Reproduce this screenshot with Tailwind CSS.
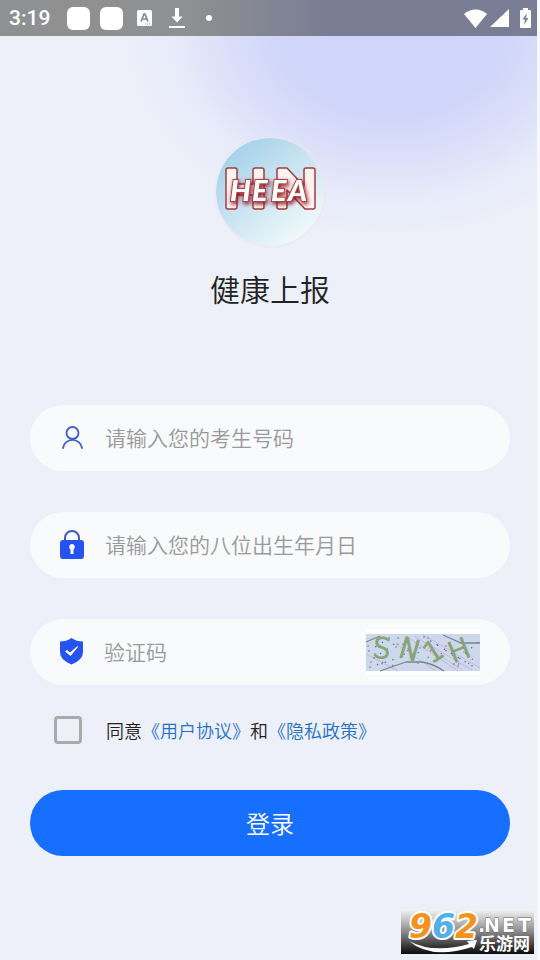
<!DOCTYPE html>
<html lang="zh-CN">
<head>
    <meta charset="UTF-8">
    <meta name="viewport" content="width=device-width, initial-scale=1.0">
    <title>健康上报</title>
    <script src="https://cdn.jsdelivr.net/npm/@tailwindcss/browser@4"></script>
</head>
<body class="relative min-h-screen overflow-x-hidden bg-[#edf0f9] border-r-[3px] border-[#f7f9fd] font-['Noto_Sans_CJK_SC',sans-serif] font-[350] text-[#222]">
    <!-- Background glow -->
    <div class="absolute inset-x-0 top-0 h-80 bg-[radial-gradient(ellipse_270px_215px_at_73%_24px,#cfd5fa_0%,#d0d6fa_42%,#dce0f9_64%,#e7eaf9_80%,#edf0f9_100%)]"></div>

    <!-- Status bar -->
    <header class="relative -mr-[3px] flex h-9 items-center justify-between bg-linear-to-r from-[#8f9092] from-35% to-[#7a7e94] to-60% pl-[9px] pr-[9px] text-white">
        <div class="flex items-center">
            <span class="w-[58px] font-[Roboto,sans-serif] text-[21px] font-medium leading-9">3:19</span>
            <span class="size-[23px] rounded-md bg-white"></span>
            <span class="ml-[10px] size-[23px] rounded-md bg-white"></span>
            <svg class="ml-[14px] h-4 w-[15px]" viewBox="0 0 15 16">
                <rect width="15" height="16" rx="1.5" fill="#fff"/>
                <path d="M4 11.500 7 4h1l3 7.500M5.200 9h4.600" fill="none" stroke="#85878d" stroke-width="1.700"/>
                <path d="M8 14h1m1 0h1m1 0h1" stroke="#85878d" stroke-width="1"/>
            </svg>
            <svg class="ml-[17px] h-[22px] w-4" viewBox="0 0 16 22" fill="#fff">
                <path d="M6 1h4v8.500h3.500L8 15.500 2.500 9.500H6zM0 19h16v2H0z"/>
            </svg>
            <span class="ml-[21px] size-[6px] rounded-full bg-white"></span>
        </div>
        <div class="flex items-center">
            <svg class="h-[19px] w-[23px]" viewBox="0 0 23 19" fill="#fff"><path d="M11.500 19 0 5Q5 .5 11.500.5T23 5z"/></svg>
            <svg class="ml-[3px] h-[18px] w-[19px]" viewBox="0 0 19 18" fill="#fff"><path d="M19 0v18H0z"/></svg>
            <svg class="ml-[11px] h-5 w-[11px]" viewBox="0 0 11 20">
                <path d="M3 0h5v2h2q1 0 1 1v16q0 1-1 1H1q-1 0-1-1V3q0-1 1-1h2z" fill="#fff"/>
                <path d="M7 5 2.500 11.500H5L4 17l4.500-7H6z" fill="#7a7e94"/>
            </svg>
        </div>
    </header>

    <main class="relative -mr-[3px] px-[30px] pb-24 pt-[102px]">
        <!-- Logo -->
        <div class="flex flex-col items-center">
            <svg class="size-[108px] rounded-full shadow-[0_0_3px_1px_#ebe6f1]" viewBox="0 0 108 108" role="img" aria-label="HEEA">
                <defs>
                    <linearGradient id="sky" x1=".1" y1=".1" x2=".8" y2=".95">
                        <stop offset="0" stop-color="#a3d0e9"/>
                        <stop offset=".5" stop-color="#cce5f2"/>
                        <stop offset="1" stop-color="#f2fafc"/>
                    </linearGradient>
                    <filter id="shade" x="-20%" y="-30%" width="140%" height="170%">
                        <feDropShadow dx="1" dy="2" stdDeviation="2" flood-color="#8d1014"/>
                    </filter>
                </defs>
                <circle cx="54" cy="54" r="54" fill="url(#sky)"/>
                <g fill="#fff3f2" stroke="#a33c3f" stroke-width="1.500" stroke-linejoin="round">
                    <path d="M12 30h7q2 0 2 2v14h16V32q0-2 2-2h7q2 0 2 2v37q0 2-2 2h-7q-2 0-2-2V57H21v12q0 2-2 2h-7q-2 0-2-2V32q0-2 2-2z"/>
                    <path d="M63 30h8l17 18V32q0-2 2-2h7q2 0 2 2v37q0 2-2 2h-8L71 52v17q0 2-2 2h-6q-2 0-2-2V32q0-2 2-2z"/>
                </g>
                <g filter="url(#shade)" font-family="Lato, sans-serif" font-size="29" font-weight="900" font-style="italic" fill="#fff" stroke="#b04548" stroke-width="2" paint-order="stroke">
                    <text x="14" y="63">H</text>
                    <text x="36" y="63">E</text>
                    <text x="55" y="63">E</text>
                    <text x="72" y="63">A</text>
                </g>
            </svg>
            <h1 class="mt-[22px] text-[30px] font-[350] leading-10">健康上报</h1>
        </div>

        <form class="mt-[97px]">
            <div class="flex flex-col gap-[41px]">
                <label class="flex h-[66px] items-center rounded-full bg-[#f8fafc] px-[30px]">
                    <svg class="size-6 shrink-0" viewBox="0 0 24 24" fill="none" stroke="#3c5fc4" stroke-width="1.800" stroke-linecap="round">
                        <circle cx="12.500" cy="7" r="6"/>
                        <path d="M3 22a9.600 9.600 0 0 1 19 0"/>
                    </svg>
                    <input type="text" aria-label="考生号码" placeholder="请输入您的考生号码" class="ml-[21px] w-full min-w-0 bg-transparent text-[21px] outline-none placeholder:text-[#999]">
                </label>
                <label class="flex h-[66px] items-center rounded-full bg-[#f8fafc] px-[30px]">
                    <svg class="h-[30px] w-6 shrink-0" viewBox="0 0 24 30">
                        <path d="M5 11V8a7 7 0 0 1 14 0v3" fill="none" stroke="#3c5bc0" stroke-width="2"/>
                        <rect y="10" width="24" height="19" rx="3" fill="#2653f0"/>
                        <path d="M12 14a3 3 0 0 1 1.500 5.500V24h-3v-4.500A3 3 0 0 1 12 14z" fill="#f8fafc"/>
                    </svg>
                    <input type="text" aria-label="出生年月日" placeholder="请输入您的八位出生年月日" class="ml-[21px] w-full min-w-0 bg-transparent text-[21px] outline-none placeholder:text-[#999]">
                </label>
                <div class="flex h-[66px] items-center rounded-full bg-[#f8fafc] px-[30px]">
                    <svg class="h-[28px] w-6 shrink-0" viewBox="0 0 24 28">
                        <path d="M11.500 0q5 3.500 11.500 3.500V14q0 8-11.500 12.500Q0 22 0 14V3.500Q6.500 3.500 11.500 0z" fill="#2653f0"/>
                        <path d="m5 13.500 2-1.500 3 2.500L17.500 8l.5 1-7.500 9z" fill="#f8fafc"/>
                    </svg>
                    <input type="text" aria-label="验证码" placeholder="验证码" class="ml-[20px] w-full min-w-0 flex-1 bg-transparent text-[21px] outline-none placeholder:text-[#999]">
                    <button type="button" aria-label="刷新验证码" class="flex h-[46px] w-[114px] shrink-0 items-center bg-white">
                        <svg class="h-[37px] w-[114px] overflow-visible" viewBox="0 0 114 37">
                            <rect width="114" height="37" fill="#cdd8ec"/>
                            <g fill="none" stroke="#c7b9dc" stroke-width="1">
                                <path d="m48 2 58 34M56 0l58 34M40 2l52 35M30 10l40 27M0 20l32 17M62 14l34 22"/>
                            </g>
                            <g fill="none" stroke-linecap="round" stroke-width="1.500">
                                <path stroke="#5b5f9c" stroke-dasharray="0 8" d="m3 17 22-14M8 24l26-18M4 33l38-12M32 4l24 30M58 3l50 30M88 30l24-22"/>
                                <path stroke="#b25a85" stroke-dasharray="0 11" d="M2 12 20 32M30 13l14 12M54 14l30 8M80 12l14 20M98 18l14 12"/>
                                <path stroke="#4e8c6a" stroke-dasharray="0 11" d="m5 28 30 5M32 10l32 14M62 4l28 20M92 32l18-4"/>
                            </g>
                            <g fill="none" stroke="#7a8490" stroke-width="1.300">
                                <path d="M14 37q14-5 26-9h16q12 2 22 9M77 1l18 8h19M0 8 14 2"/>
                            </g>
                            <g font-family="DejaVu Sans, sans-serif" font-size="28" fill="#87a577" stroke="#87a577" stroke-width="1.500">
                                <text x="7" y="24" transform="rotate(6 17 13)">S</text>
                                <text x="34" y="25" transform="rotate(16 44 14)">N</text>
                                <text x="58" y="27" transform="rotate(-32 67 17)">1</text>
                                <text x="82" y="26" transform="rotate(-22 93 15)">H</text>
                            </g>
                        </svg>
                    </button>
                </div>
            </div>

            <!-- Agreement -->
            <div class="mt-[31px] flex items-center pl-6 text-[18px] leading-7">
                <input id="agree" type="checkbox" class="size-7 shrink-0 appearance-none rounded-[4px] border-3 border-[#aaa] checked:bg-[#176fff]">
                <p class="ml-6">
                    <label for="agree">同意</label><a href="#" class="text-[#2470c8]">《用户协议》</a>和<a href="#" class="text-[#2470c8]">《隐私政策》</a>
                </p>
            </div>

            <button type="submit" class="mt-[46px] h-[66px] w-full rounded-full bg-[#176fff] text-2xl text-white">登录</button>
        </form>
    </main>

    <!-- Site badge -->
    <a href="#" class="absolute bottom-[6px] right-[3px] block">
        <svg class="h-[44px] w-[133px] overflow-visible" viewBox="0 0 133 44">
            <defs>
                <linearGradient id="plate" x2="0" y2="1">
                    <stop offset="0" stop-color="#f3f3f3"/>
                    <stop offset=".5" stop-color="#888"/>
                    <stop offset="1" stop-color="#0b0b0b"/>
                </linearGradient>
            </defs>
            <rect width="133" height="44" fill="url(#plate)"/>
            <g font-family="DejaVu Sans, sans-serif" font-weight="700" stroke-linejoin="round">
                <g font-size="33" font-style="italic" stroke="#fff" stroke-width="4" paint-order="stroke">
                    <text x="8" y="28" fill="#f4921e">9</text>
                    <text x="31" y="28" fill="#4fb0ea">6</text>
                    <text x="54" y="28" fill="#f4921e">2</text>
                </g>
                <g font-size="19" fill="#fff" stroke="#666" stroke-width="1" paint-order="stroke">
                    <text x="77" y="22">.</text>
                    <text x="83" y="22">N</text>
                    <text x="101" y="22">E</text>
                    <text x="117" y="22">T</text>
                </g>
                <text x="78" y="40" font-size="17" font-family="Noto Sans CJK SC, sans-serif" fill="#fff">乐游网</text>
            </g>
            <path d="M8 31q24 13 60 3l-2-3 10-1-3 9-2-2Q30 50 8 31z" fill="#fff"/>
        </svg>
    </a>
</body>
</html>
